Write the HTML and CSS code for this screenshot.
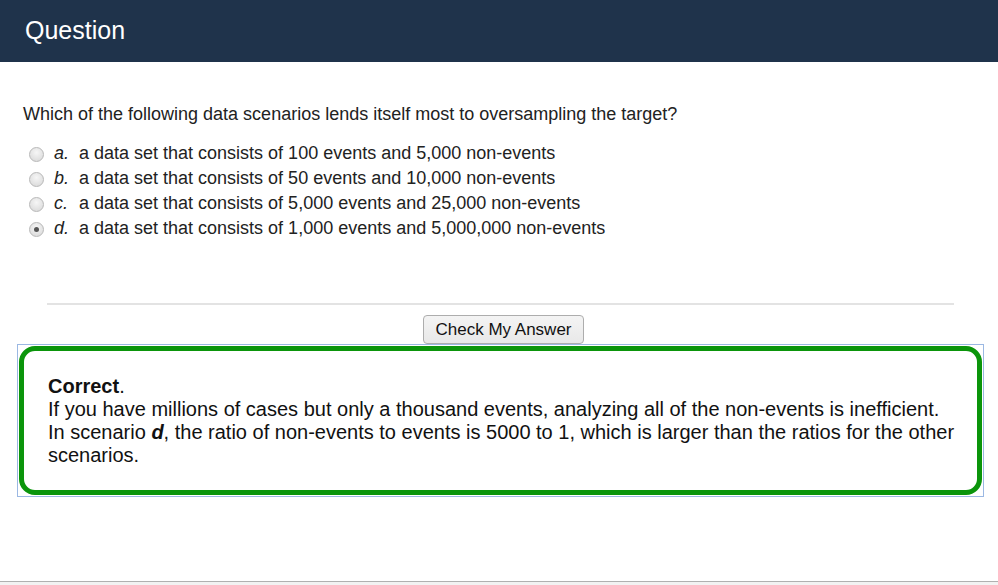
FILE: index.html
```
<!DOCTYPE html>
<html>
<head>
<meta charset="utf-8">
<link rel="stylesheet" href="styles.css">
</head>
<body>
<div class="page">
  <header class="topbar"><h1 class="title">Question</h1></header>
  <main class="content">
    <p class="question">Which of the following data scenarios lends itself most to oversampling the target?</p>
    <ul class="options">
      <li class="option"><span class="radio"></span><span class="letter">a.</span><span class="otext">a data set that consists of 100 events and 5,000 non-events</span></li>
      <li class="option"><span class="radio"></span><span class="letter">b.</span><span class="otext">a data set that consists of 50 events and 10,000 non-events</span></li>
      <li class="option"><span class="radio"></span><span class="letter">c.</span><span class="otext">a data set that consists of 5,000 events and 25,000 non-events</span></li>
      <li class="option"><span class="radio checked"></span><span class="letter">d.</span><span class="otext">a data set that consists of 1,000 events and 5,000,000 non-events</span></li>
    </ul>
    <hr class="divider">
    <div class="actions"><button class="check-btn">Check My Answer</button></div>
    <div class="feedback-wrap">
      <div class="feedback">
        <p class="fb-title"><b>Correct</b>.</p>
        <p class="fb-body">If you have millions of cases but only a thousand events, analyzing all of the non-events is inefficient. In scenario <b class="scen">d</b>, the ratio of non-events to events is 5000 to 1, which is larger than the ratios for the other scenarios.</p>
      </div>
    </div>
  </main>
  <div class="bottombar"></div>
</div>
</body>
</html>
```
FILE: styles.css
```
html, body {
  margin: 0;
  padding: 0;
  background: #fff;
  font-family: "Liberation Sans", Arial, sans-serif;
  color: #222;
}
.page {
  height: 585px;
  display: flex;
  flex-direction: column;
  overflow: hidden;
}
.topbar {
  background: #1f334b;
  height: 62px;
  display: flex;
  align-items: center;
  padding-left: 25px;
  flex: none;
}
.title {
  margin: 0;
  color: #fff;
  font-weight: normal;
  font-size: 25px;
  position: relative;
  top: -1px;
}
.content {
  flex: 1;
  padding: 0 14px 0 17px;
}
.question {
  margin: 42px 0 0 6px;
  font-size: 18px;
  line-height: 20px;
}
.options {
  list-style: none;
  margin: 17px 0 0 0;
  padding: 0 0 0 12px;
}
.option {
  display: flex;
  align-items: center;
  height: 25px;
  font-size: 18px;
}
.radio {
  width: 15px;
  height: 15px;
  border-radius: 50%;
  border: 1px solid #b8b8b8;
  background: radial-gradient(circle at 50% 35%, #f6f6f6, #d6d6d6);
  box-sizing: border-box;
  margin-right: 10px;
  position: relative;
  top: 1px;
}
.radio.checked::after {
  content: "";
  position: absolute;
  left: 4px;
  top: 4px;
  width: 5px;
  height: 5px;
  border-radius: 50%;
  background: #555;
}
.letter {
  font-style: italic;
  width: 25px;
}
.divider {
  border: none;
  border-top: 2px solid #e3e3e3;
  margin: 62px 30px 0 30px;
}
.actions {
  display: flex;
  justify-content: center;
  margin-top: 10px;
}
.check-btn {
  font-family: "Liberation Sans", Arial, sans-serif;
  font-size: 17px;
  color: #111;
  background: linear-gradient(#f4f4f4, #e8e8e8);
  border: 1px solid #adadad;
  border-radius: 4px;
  height: 29px;
  width: 161px;
  padding: 0;
  position: relative;
  left: 3px;
}
.feedback-wrap {
  margin-top: 0;
  border: 1px solid #9bb8e3;
  padding: 1px;
}
.feedback {
  border: 5px solid #0b950b;
  border-radius: 16px;
  padding: 24px 16px 23px 24px;
  font-size: 20px;
  line-height: 23px;
  color: #111;
}
.fb-title, .fb-body {
  margin: 0;
}
.scen {
  font-style: italic;
}
.bottombar {
  height: 3px;
  border-top: 1px solid #b0b0b0;
  background: #f2f2f2;
  flex: none;
}
```
